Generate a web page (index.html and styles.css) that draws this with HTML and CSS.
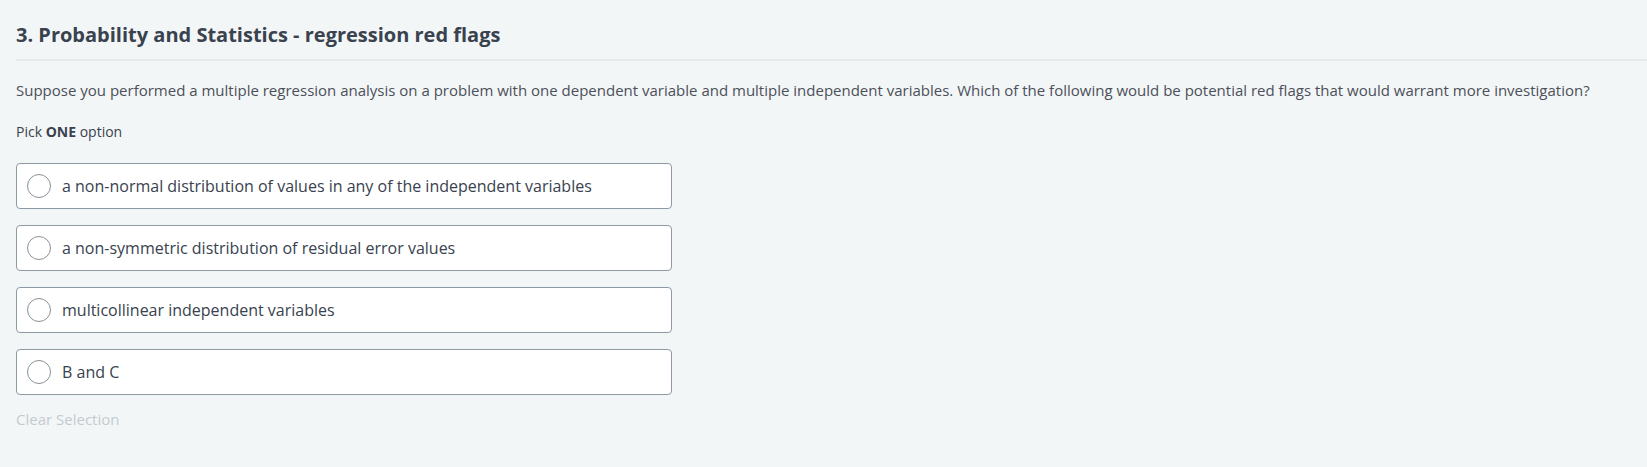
FILE: index.html
```html
<!DOCTYPE html>
<html>
<head>
<meta charset="utf-8">
<link rel="stylesheet" href="styles.css">
</head>
<body>
<div class="page">
  <h2 class="title">3. Probability and Statistics - regression red flags</h2>
  <p class="question">Suppose you performed a multiple regression analysis on a problem with one dependent variable and multiple independent variables. Which of the following would be potential red flags that would warrant more investigation?</p>
  <p class="pick">Pick <strong>ONE</strong> option</p>
  <div class="options">
    <label class="option"><span class="radio"></span><span class="opt-text">a non-normal distribution of values in any of the independent variables</span></label>
    <label class="option"><span class="radio"></span><span class="opt-text">a non-symmetric distribution of residual error values</span></label>
    <label class="option"><span class="radio"></span><span class="opt-text">multicollinear independent variables</span></label>
    <label class="option"><span class="radio"></span><span class="opt-text">B and C</span></label>
  </div>
  <div class="clear">Clear Selection</div>
</div>
</body>
</html>
```
FILE: styles.css
```css
html, body {
  margin: 0;
  padding: 0;
  background: #f3f6f7;
  height: 100%;
}
.page {
  font-family: "Open Sans", "Liberation Sans", sans-serif;
  color: #39424e;
  padding: 21px 0 0 16px;
}
.title {
  margin: 0;
  font-size: 20px;
  line-height: 28px;
  font-weight: 700;
  color: #39424e;
  padding-bottom: 10px;
  border-bottom: 2px solid #e6eaec;
}
.question {
  margin: 18px 0 0;
  font-size: 15px;
  line-height: 22px;
  color: #4b5059;
}
.pick {
  margin: 21px 0 0;
  font-size: 14px;
  line-height: 20px;
  color: #39424e;
}
.pick strong {
  font-weight: 700;
}
.options {
  margin-top: 21px;
  display: flex;
  flex-direction: column;
  gap: 16px;
  width: 656px;
}
.option {
  display: flex;
  align-items: center;
  height: 46px;
  box-sizing: border-box;
  background: #fff;
  border: 1px solid #8e9aa3;
  border-radius: 4px;
  padding-left: 10px;
}
.radio {
  width: 24px;
  height: 24px;
  box-sizing: border-box;
  border: 1.5px solid #8a9096;
  border-radius: 50%;
  flex: none;
}
.opt-text {
  margin-left: 11px;
  font-size: 16px;
  color: #39424e;
}
.clear {
  margin-top: 13px;
  font-size: 15px;
  line-height: 22px;
  color: #c3cbd0;
}
```
